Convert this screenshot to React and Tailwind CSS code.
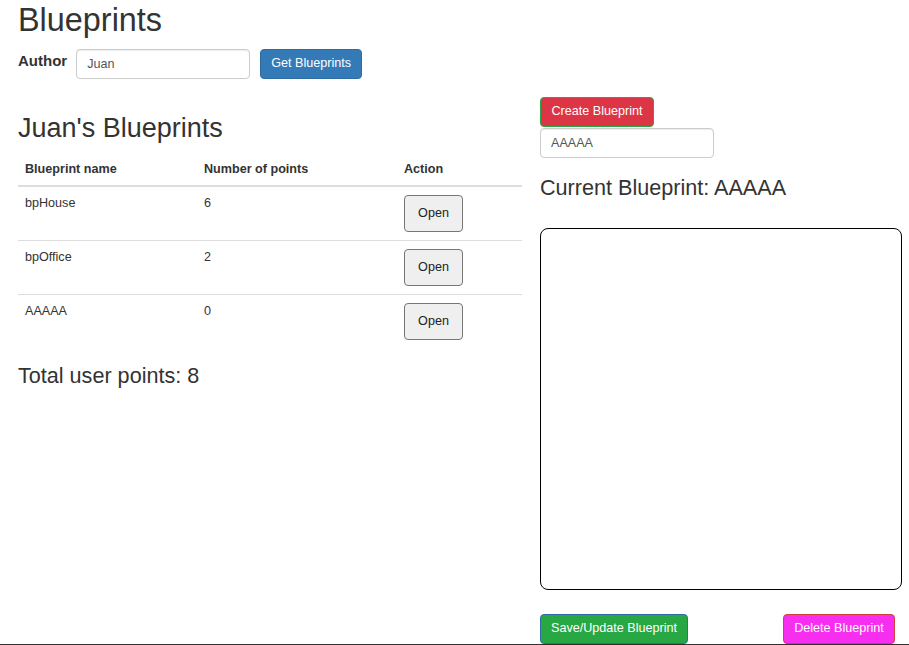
import React from 'react';

const blueprints = [
  { name: 'bpHouse', points: 6 },
  { name: 'bpOffice', points: 2 },
  { name: 'AAAAA', points: 0 },
];

export default function App() {
  const total = blueprints.reduce((s, b) => s + b.points, 0);

  return (
    <div className="h-[645px] overflow-hidden border-b border-[#333] bg-white font-['Liberation_Sans',Arial,sans-serif] text-[12.6px] leading-[1.42857] text-[#333]">
      <div className="px-[18px]">
        <h1 className="pt-[3px] text-[32.4px] leading-[1.1]">Blueprints</h1>

        {/* Author search */}
        <div className="mt-[10px] flex items-start">
          <label className="mt-[1px] text-[15px] font-bold">Author</label>
          <input
            defaultValue="Juan"
            className="ml-[9px] h-[30px] w-[174px] rounded-[4px] border border-[#ccc] px-[10px] text-[12.6px] text-[#555] shadow-[inset_0_1px_1px_rgba(0,0,0,0.075)] outline-none"
          />
          <button className="ml-[10px] h-[30px] w-[102px] rounded-[4px] border border-[#2e6da4] bg-[#337ab7] text-[12.6px] text-white">
            Get Blueprints
          </button>
        </div>

        <div className="flex gap-[18px]">
          {/* Left column */}
          <div className="w-[504px] shrink-0">
            <h2 className="mt-[35px] text-[27px] leading-[1.1]">Juan's Blueprints</h2>
            <table className="mt-[9px] w-full border-collapse text-left">
              <thead>
                <tr className="border-b-2 border-[#ddd]">
                  <th className="w-[179px] px-[7px] pt-[9px] pb-[6px] align-bottom font-bold">Blueprint name</th>
                  <th className="w-[200px] px-[7px] pt-[9px] pb-[6px] align-bottom font-bold">Number of points</th>
                  <th className="px-[7px] pt-[9px] pb-[6px] align-bottom font-bold">Action</th>
                </tr>
              </thead>
              <tbody>
                {blueprints.map((bp, i) => (
                  <tr key={bp.name} className={i > 0 ? 'border-t border-[#ddd]' : ''}>
                    <td className="px-[7px] pt-[8px] pb-[8px] align-top">{bp.name}</td>
                    <td className="px-[7px] pt-[8px] pb-[8px] align-top">{bp.points}</td>
                    <td className="px-[7px] pt-[8px] pb-[8px] align-top">
                      <button className="h-[37px] w-[59px] rounded-[4px] border border-[#767676] bg-[#efefef] text-[12.6px] text-[#222]">
                        Open
                      </button>
                    </td>
                  </tr>
                ))}
              </tbody>
            </table>
            <h3 className="mt-[16px] text-[21.6px] leading-[1.1]">Total user points: {total}</h3>
          </div>

          {/* Right column */}
          <div className="w-[362px] shrink-0">
            <button className="mt-[18px] block h-[30px] w-[114px] rounded-[4px] border border-[#28a745] bg-[#dc3545] text-[12.6px] text-white">
              Create Blueprint
            </button>
            <input
              defaultValue="AAAAA"
              className="mt-[1px] block h-[30px] w-[174px] rounded-[4px] border border-[#ccc] px-[10px] text-[12.6px] text-[#555] shadow-[inset_0_1px_1px_rgba(0,0,0,0.075)] outline-none"
            />
            <h3 className="mt-[18px] text-[21.6px] leading-[1.1]">Current Blueprint: AAAAA</h3>
            <div className="mt-[29px] h-[362px] w-[362px] rounded-[8px] border border-black bg-white" />
            <div className="mt-[24px] flex">
              <button className="h-[30px] w-[148px] rounded-[4px] border border-[#2e6da4] bg-[#28a745] text-[12.6px] text-white">
                Save/Update Blueprint
              </button>
              <button className="ml-[95px] h-[30px] w-[112px] rounded-[4px] border border-[#d43f3a] bg-[#f72ef0] text-[12.6px] text-white">
                Delete Blueprint
              </button>
            </div>
          </div>
        </div>
      </div>
    </div>
  );
}
